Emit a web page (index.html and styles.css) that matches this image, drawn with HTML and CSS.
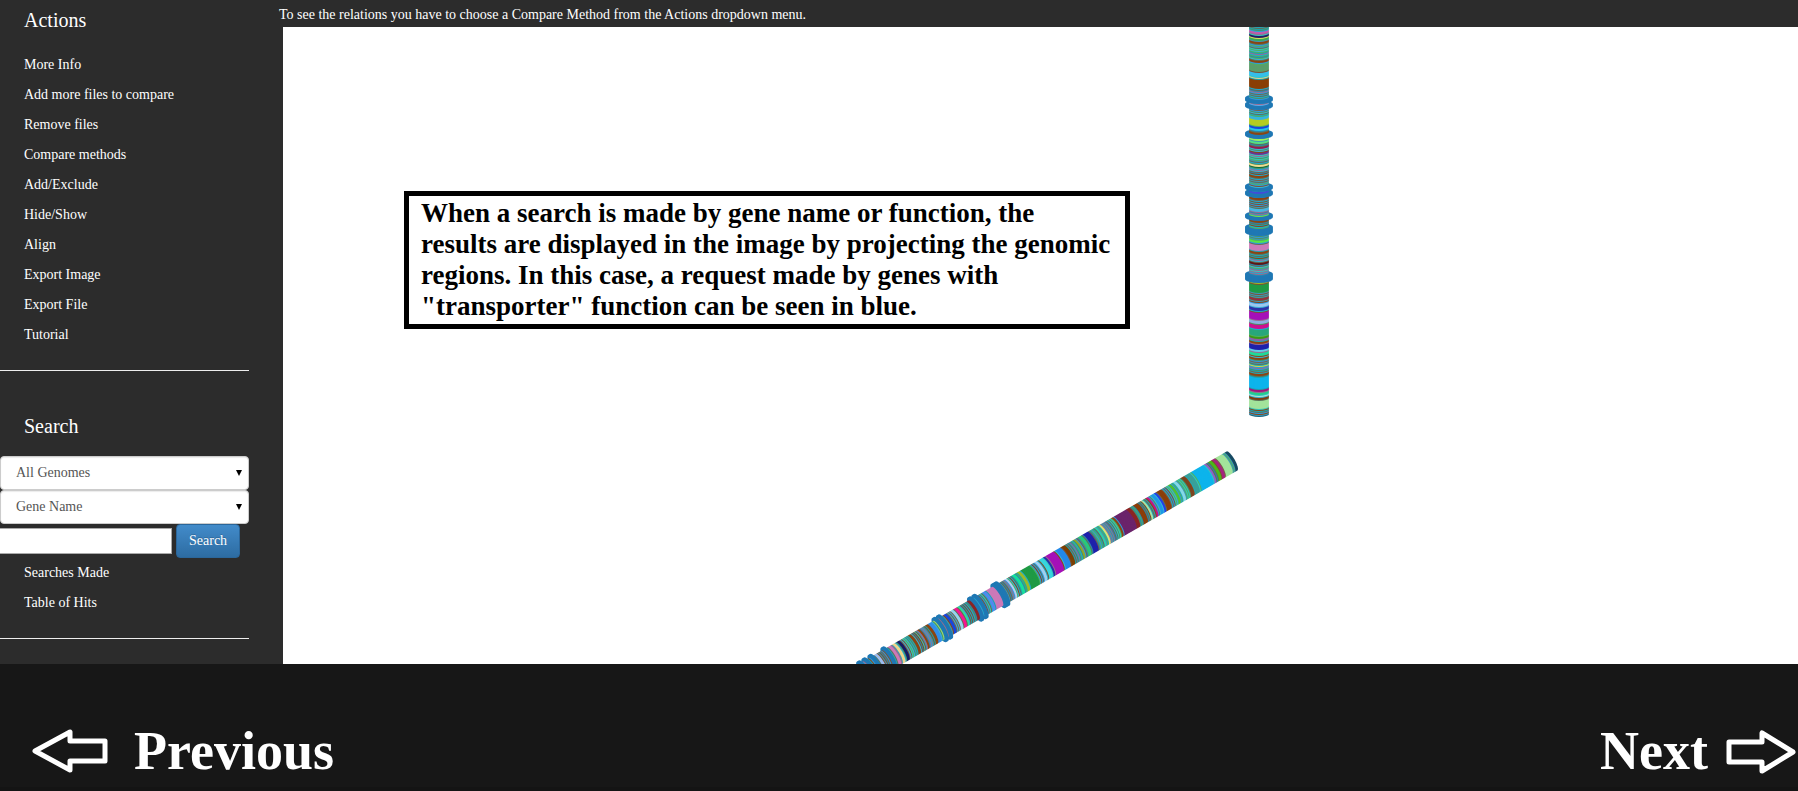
FILE: index.html
```html
<!DOCTYPE html>
<html lang="en">
<head>
<meta charset="utf-8">
<title>Genome comparison</title>
<link rel="stylesheet" href="styles.css">
</head>
<body>
<div class="app">
  <aside class="sidebar">
    <h2 class="side-title">Actions</h2>
    <nav class="menu">
      <a href="#">More Info</a>
      <a href="#">Add more files to compare</a>
      <a href="#">Remove files</a>
      <a href="#">Compare methods</a>
      <a href="#">Add/Exclude</a>
      <a href="#">Hide/Show</a>
      <a href="#">Align</a>
      <a href="#">Export Image</a>
      <a href="#">Export File</a>
      <a href="#">Tutorial</a>
    </nav>
    <hr class="rule">
    <h2 class="side-title search-title">Search</h2>
    <form class="search">
      <div class="select-wrap">
        <select aria-label="Genome"><option>All Genomes</option></select>
      </div>
      <div class="select-wrap">
        <select aria-label="Search by"><option>Gene Name</option></select>
      </div>
      <div class="query">
        <input type="text" aria-label="Search text">
        <button type="button">Search</button>
      </div>
    </form>
    <nav class="menu">
      <a href="#">Searches Made</a>
      <a href="#">Table of Hits</a>
    </nav>
    <hr class="rule">
  </aside>
  <main class="main">
    <p class="notice">To see the relations you have to choose a Compare Method from the Actions dropdown menu.</p>
    <div class="stage">
      <svg class="plot" id="plot" aria-hidden="true"></svg>
      <p class="caption">When a search is made by gene name or function, the<br>results are displayed in the image by projecting the genomic<br>regions. In this case, a request made by genes with<br>"transporter" function can be seen in blue.</p>
    </div>
  </main>
</div>
<footer class="pager">
  <a class="step" href="#">
    <svg class="arrow" viewBox="0 0 78 46" aria-hidden="true"><path d="M5 23 40 4V13H75V33H40V42Z"/></svg>
    Previous
  </a>
  <a class="step next" href="#">
    Next
    <svg class="arrow" viewBox="0 0 78 46" aria-hidden="true"><path d="M73 24 42 5V14H9V34H42V43Z"/></svg>
  </a>
</footer>
<script src="plot.js"></script>
</body>
</html>
```
FILE: styles.css
```css
* { box-sizing: border-box; }
body {
  margin: 0;
  min-height: 100vh;
  display: flex;
  flex-direction: column;
  background: #171717;
  color: #fff;
  font: 14px/20px "Liberation Serif", "Times New Roman", serif;
}
a { color: inherit; text-decoration: none; }
.app { display: flex; background: #2c2c2c; }
.sidebar { flex: 0 0 279px; padding: 8px 30px 25px 0; }
.side-title { margin: 0; padding-left: 24px; font-size: 20px; line-height: 24px; font-weight: 400; }
.menu { display: flex; flex-direction: column; }
.menu a { padding-left: 24px; line-height: 30px; }
.side-title + .menu { margin-top: 18px; }
.rule { margin: 20px 0 0; border: 0; border-top: 1px solid #eee; }
.search-title { margin-top: 43px; }
.search { margin-top: 18px; }
.select-wrap { position: relative; }
.select-wrap::after {
  content: "";
  position: absolute;
  top: 14px;
  right: 7px;
  width: 6px;
  height: 6px;
  background: #000;
  clip-path: polygon(0 0, 100% 0, 50% 100%);
  pointer-events: none;
}
select {
  display: block;
  width: 100%;
  height: 34px;
  padding: 0 15px;
  appearance: none;
  border: 1px solid #ccc;
  border-radius: 4px;
  background: #fff;
  color: #555;
  font: inherit;
  box-shadow: inset 0 1px 1px rgba(0, 0, 0, .08);
}
.query { display: flex; align-items: center; gap: 4px; }
.query input {
  width: 172px;
  height: 26px;
  padding: 2px 4px;
  border: 1px solid #aaa;
  border-left: 0;
  background: #fff;
  font: inherit;
}
.query button {
  height: 34px;
  padding: 0 12px;
  border: 1px solid #2b669a;
  border-radius: 4px;
  background: linear-gradient(#428bca, #2d6ca2);
  color: #fff;
  font: inherit;
  text-shadow: 0 -1px 0 rgba(0, 0, 0, .2);
}
.main { flex: 1; min-width: 0; display: flex; flex-direction: column; }
.notice { margin: 0; padding: 5px 0 2px; }
.stage {
  position: relative;
  flex: 1;
  overflow: hidden;
  margin-left: 4px;
  padding: 164px 0 0 121px;
  background: #fff;
}
.plot { position: absolute; inset: 0; width: 100%; height: 100%; }
.caption {
  position: relative;
  width: fit-content;
  margin: 0;
  padding: 2px 15px 2px 12px;
  border: 5px solid #000;
  background: #fff;
  color: #000;
  font-size: 27px;
  line-height: 31px;
  font-weight: 700;
}
.pager {
  flex: 1;
  display: flex;
  justify-content: space-between;
  align-items: flex-start;
  padding: 56px 0 0 30px;
  border-bottom: 4px solid #141414;
}
.step { display: flex; align-items: center; gap: 26px; font-size: 54px; line-height: 62px; font-weight: 700; }
.next { gap: 12px; }
.arrow { width: 78px; height: 46px; fill: none; stroke: #fff; stroke-width: 5; stroke-linejoin: round; }
```
FILE: plot.js
```js
// Genomes are drawn as stacked discs; each band is [start, end, colour],
// measured in pixels from the free end of the tube.
const NS = 'http://www.w3.org/2000/svg';
const COOL = ['#1cabd4', '#2e9be0', '#20a8ba', '#39b5d9', '#18a5b0', '#2589b0', '#32c8c0', '#3d98b8'];
const WARM = ['#7d5030', '#666a52', '#8b4513', '#4c8f62', '#7a6048', '#5d7058', '#4fb060', '#9b6b8e'];

let seed = 7;
const random = () => (seed = (seed * 16807) % 2147483647) / 2147483647;

function ellipse(parent, y, rx, ry, fill) {
  const e = document.createElementNS(NS, 'ellipse');
  e.setAttribute('cy', y);
  e.setAttribute('rx', rx);
  e.setAttribute('ry', ry);
  e.setAttribute('fill', fill);
  parent.appendChild(e);
}

function tube(transform, length, radius, bands, hits) {
  const g = document.createElementNS(NS, 'g');
  g.setAttribute('transform', transform);
  document.getElementById('plot').appendChild(g);
  for (let s = 0; s < length; s++) {
    const hit = hits.some(h => Math.abs(h - s) <= 1);
    const band = bands.find(b => s >= b[0] && s < b[1]);
    const palette = s % 2 ? COOL : WARM;
    const filler = palette[Math.floor(random() * palette.length)];
    if (hit) ellipse(g, -s, 14, 4, '#1f78b4');
    else ellipse(g, -s, radius, 3, band ? band[2] : filler);
  }
}

tube('translate(976 387)', 400, 10, [
  [0, 1, '#17637d'], [8, 16, '#a3e39b'], [17, 19, '#7c3f12'], [20, 21, '#b7e8d0'], [22, 24, '#22cf8c'],
  [25, 27, '#a0157f'], [28, 39, '#0db4ec'], [41, 43, '#8b4513'], [50, 51, '#e0d43a'], [57, 59, '#8b4513'],
  [61, 64, '#20d99a'], [65, 67, '#62cdea'], [67, 72, '#1f22ab'], [73, 75, '#8b4513'], [76, 78, '#8d61a8'],
  [78, 80, '#3b9b14'], [81, 87, '#29a77b'], [88, 92, '#cc118f'], [93, 96, '#8caee0'], [97, 104, '#a511b8'],
  [106, 109, '#2f33a8'], [110, 113, '#9cc7ed'], [117, 118, '#9d2050'], [124, 132, '#1f9a45'], [133, 135, '#9dba27'],
  [152, 154, '#5e1717'], [163, 165, '#8b4513'], [166, 172, '#cc79b8'], [174, 176, '#55e548'],
  [195, 198, '#8b4513'], [199, 201, '#76e045'], [205, 208, '#49b5e1'], [217, 219, '#8b4513'],
  [223, 225, '#414ed8'], [239, 241, '#8b4513'], [249, 250, '#0a6b3d'], [250, 252, '#f0dc90'],
  [262, 264, '#6c3390'], [268, 270, '#951b51'], [273, 275, '#54e084'], [276, 278, '#9cf060'],
  [282, 284, '#8b4513'], [286, 288, '#27c3e9'], [288, 290, '#1747dd'], [291, 297, '#b5cc22'],
  [298, 300, '#35b4dd'], [308, 312, '#62aae8'], [328, 337, '#8a3f06'], [338, 339, '#e5cf92'],
  [340, 344, '#36bfe9'], [345, 352, '#5a9e6a'], [354, 356, '#8b4513'], [373, 375, '#8b4513'],
  [376, 378, '#3bab50'], [378, 379, '#e2de60'], [379, 381, '#202067'], [383, 385, '#c05ab0']
], [136, 139, 183, 186, 198, 221, 227, 280, 309, 315]);

tube('translate(949 434) rotate(-120)', 450, 11, [
  [0, 3, '#174a62'], [6, 14, '#a3e39b'], [15, 18, '#a5247e'], [19, 22, '#4aba17'], [25, 27, '#8d61c8'],
  [28, 42, '#0db4ec'], [44, 49, '#38a09a'], [51, 54, '#7c4421'], [60, 63, '#86d8e6'], [66, 68, '#50c42a'],
  [77, 82, '#8b3f0a'], [83, 85, '#2240ea'], [86, 89, '#1e98e6'], [92, 94, '#c51683'], [98, 100, '#a2e3aa'],
  [104, 109, '#8b3f0a'], [113, 117, '#8b2525'], [117, 131, '#6b246b'], [132, 134, '#8b4513'],
  [147, 149, '#d8ea75'], [152, 154, '#30cfaa'], [161, 167, '#1f22ab'], [169, 172, '#25c880'],
  [176, 178, '#91a82a'], [188, 192, '#7c4005'], [193, 199, '#2389e8'], [201, 210, '#a511b8'],
  [211, 213, '#2730a8'], [214, 218, '#38d6dd'], [220, 223, '#a0cff0'], [229, 239, '#1f9a45'],
  [240, 243, '#9dba27'], [246, 249, '#18e09a'], [255, 257, '#b3cff5'], [271, 279, '#cc79b8'],
  [280, 283, '#5588ed'], [298, 301, '#8b2525'], [310, 312, '#32dc97'], [313, 316, '#f51691'],
  [317, 320, '#94d5ed'], [325, 328, '#1747dd'], [330, 332, '#78dc40'], [338, 340, '#a2e36b'],
  [342, 346, '#348fe9'], [346, 349, '#8b4513'], [356, 358, '#8b4513'], [366, 368, '#8b4513'],
  [379, 382, '#151b65'], [384, 387, '#efd58a'], [389, 392, '#cc79b8'], [395, 398, '#48df42'],
  [405, 408, '#9abdf0']
], [266, 269, 291, 296, 332, 337, 396, 411, 418, 424]);
```
